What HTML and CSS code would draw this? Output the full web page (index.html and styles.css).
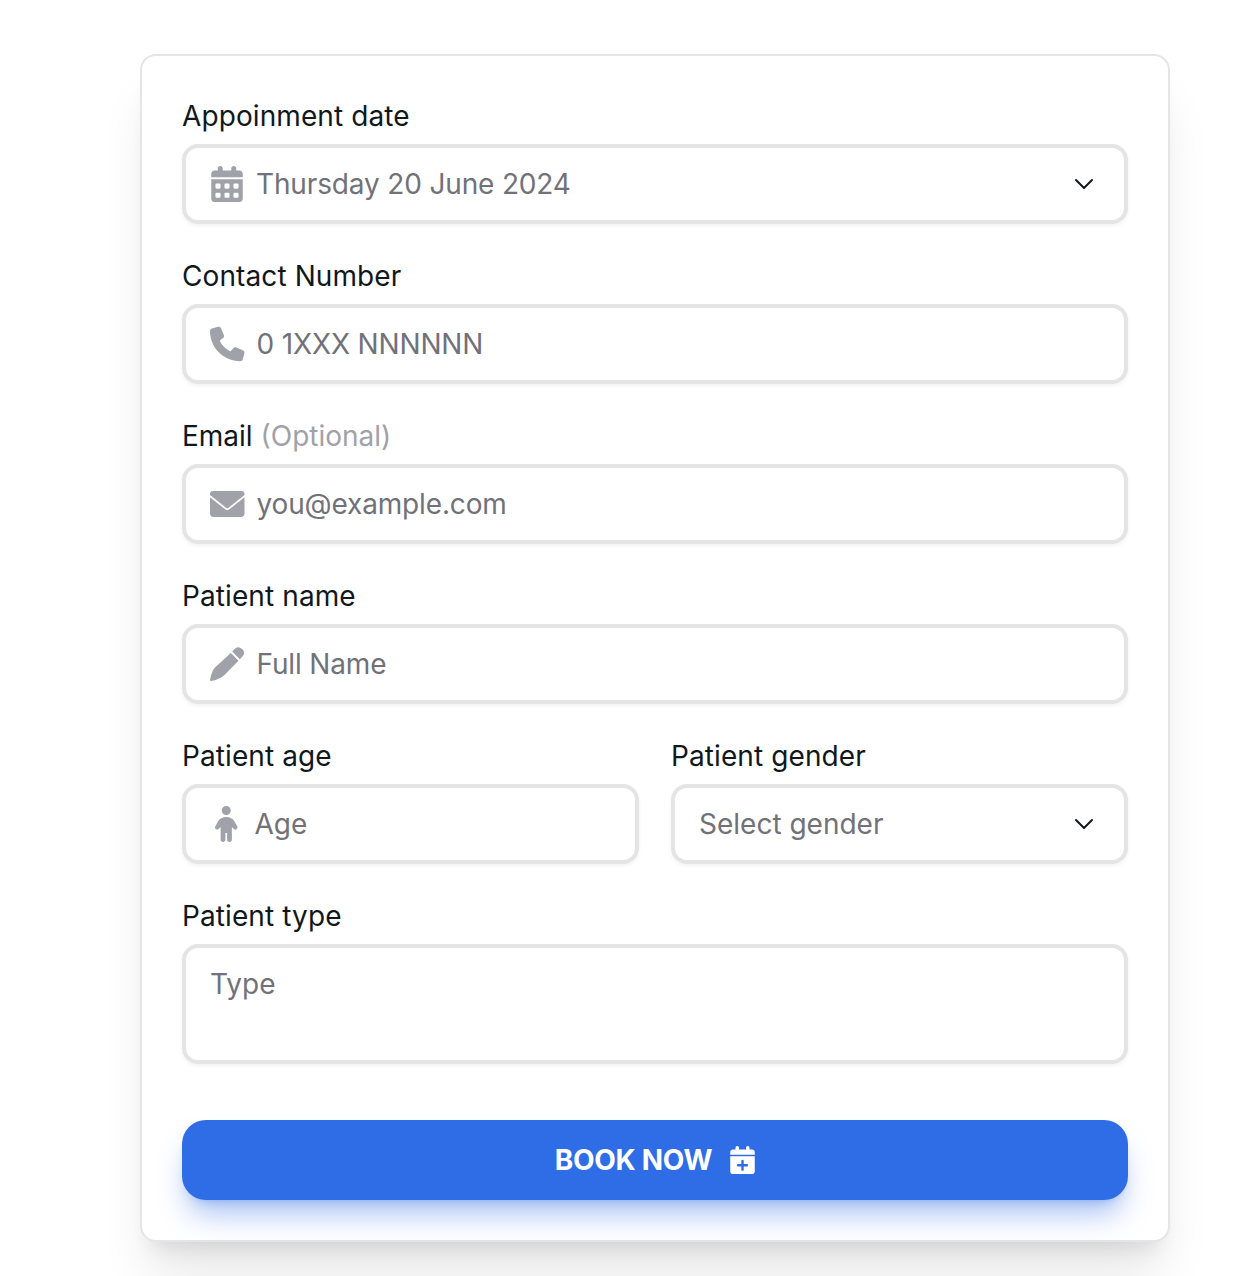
FILE: index.html
```
<!DOCTYPE html>
<html lang="en">
<head>
<meta charset="utf-8">
<title>Book an appointment</title>
<link rel="stylesheet" href="styles.css">
</head>
<body>
<form class="card">
  <div class="field">
    <span class="label">Appoinment date</span>
    <div class="control">
      <svg class="icon calendar" viewBox="0 0 448 512"><path fill-rule="evenodd" d="M128 0c20 0 35 14.300 35 32V64H285V32c0-17.700 15-32 35-32s35 14.300 35 32V64h45c26.500 0 48 21.500 48 48v48H0V112C0 85.500 21.500 64 48 64H93V32c0-17.700 15-32 35-32zM0 188H448V464c0 26.500-21.500 48-48 48H48c-26.500 0-48-21.500-48-48zM76 250a16 16 0 0 0-16 16v40a16 16 0 0 0 16 16h40a16 16 0 0 0 16-16v-40a16 16 0 0 0-16-16zM204 250a16 16 0 0 0-16 16v40a16 16 0 0 0 16 16h40a16 16 0 0 0 16-16v-40a16 16 0 0 0-16-16zM332 250a16 16 0 0 0-16 16v40a16 16 0 0 0 16 16h40a16 16 0 0 0 16-16v-40a16 16 0 0 0-16-16zM76 380a16 16 0 0 0-16 16v40a16 16 0 0 0 16 16h40a16 16 0 0 0 16-16v-40a16 16 0 0 0-16-16zM204 380a16 16 0 0 0-16 16v40a16 16 0 0 0 16 16h40a16 16 0 0 0 16-16v-40a16 16 0 0 0-16-16zM332 380a16 16 0 0 0-16 16v40a16 16 0 0 0 16 16h40a16 16 0 0 0 16-16v-40a16 16 0 0 0-16-16z"/></svg>
      <span class="value tight">Thursday 20 June 2024</span>
      <svg class="chevron" viewBox="0 0 24 24"><path d="m6 9 6 6 6-6"/></svg>
    </div>
  </div>
  <div class="field">
    <span class="label">Contact Number</span>
    <div class="control">
      <svg class="icon" viewBox="0 0 512 512"><path d="M164.900 24.600c-7.700-18.600-28-28.500-47.400-23.200l-88 24C12.100 30.200 0 46 0 64C0 311.400 200.600 512 448 512c18 0 33.800-12.100 38.600-29.500l24-88c5.300-19.400-4.600-39.700-23.200-47.400l-96-40c-16.300-6.800-35.200-2.100-46.300 11.600L304.700 368C234.300 334.700 177.300 277.700 144 207.300L193.300 167c13.700-11.200 18.400-30 11.600-46.300l-40-96z"/></svg>
      <span class="value tight">0 1XXX NNNNNN</span>
    </div>
  </div>
  <div class="field">
    <span class="label email">Email <span class="optional">(Optional)</span></span>
    <div class="control">
      <svg class="icon" viewBox="0 0 34.500 34.500"><path d="M3 4.200h28.500q3 0 3 3v1L18.500 20.900q-1.250 1-2.500 0L0 8.200v-1q0-3 3-3zM0 10.500l15.100 12.100q2.150 1.600 4.300 0L34.500 10.500v16q0 3.700-3.700 3.700H3.700Q0 30.200 0 26.500z"/></svg>
      <span class="value tight">you@example.com</span>
    </div>
  </div>
  <div class="field">
    <span class="label">Patient name</span>
    <div class="control">
      <svg class="icon" viewBox="0 0 34.500 34.500"><path d="M20.800 6.200l7.700 7.700-14.300 14.600q-1.400 1.400-3.200 2.200-4.600 2.600-9.600 3.600-1.600.2-1.300-1.400.8-5 2.800-9.200.9-1.900 2.400-3.300zM22.200 4.800l3-3q3.400-3 6.800.4l.4.400q3.400 3.400.3 6.800l-2.900 3z"/></svg>
      <span class="value tight">Full Name</span>
    </div>
  </div>
  <div class="row">
    <div class="field">
      <span class="label">Patient age</span>
      <div class="control">
        <svg class="icon child" viewBox="0 0 320 512"><path d="M96 64a64 64 0 1 1 128 0A64 64 0 1 1 96 64zm52 320v96c0 17.700-14.300 32-34 32s-34-14.300-34-32V298L59.100 321c-9.400 15-29.200 19.400-44.100 10S-4.500 301.900 4.900 287l34.900-63.300C66 180 110 158 160 158s94 22 120.200 65.600L315.100 287c9.400 15 4.900 34.700-10 44.100s-34.700 4.900-44.100-10L240 298V480c0 17.700-14.300 32-34 32s-34-14.300-34-32V384z"/></svg>
        <span class="value">Age</span>
      </div>
    </div>
    <div class="field">
      <span class="label">Patient gender</span>
      <div class="control">
        <span class="value">Select gender</span>
        <svg class="chevron" viewBox="0 0 24 24"><path d="m6 9 6 6 6-6"/></svg>
      </div>
    </div>
  </div>
  <div class="field">
    <span class="label">Patient type</span>
    <div class="control area"><span class="value">Type</span></div>
  </div>
  <button class="submit" type="button">BOOK NOW
    <svg class="plus" viewBox="0 0 448 512"><path fill-rule="evenodd" d="M96 32a32 32 0 0 1 64 0v32h128V32a32 32 0 0 1 64 0v32h48c26.500 0 48 21.500 48 48v48H0v-48c0-26.500 21.500-48 48-48h48zM0 188h448v276c0 26.500-21.500 48-48 48H48c-26.500 0-48-21.500-48-48zM246 272a22 22 0 0 0-44 0v58h-58a22 22 0 0 0 0 44h58v58a22 22 0 0 0 44 0v-58h58a22 22 0 0 0 0-44h-58z"/></svg>
  </button>
</form>
</body>
</html>
```
FILE: styles.css
```
* { box-sizing: border-box; }
body {
  margin: 0;
  height: 1276px;
  overflow: hidden;
  padding: 54px 76px 0 140px;
  background: #fff;
  color: #11181c;
  font: 400 28px/40px Inter, "Liberation Sans", sans-serif;
}
.card {
  display: flex;
  flex-direction: column;
  gap: 32px;
  padding: 40px;
  border: 2px solid #e4e4e9;
  border-radius: 16px;
  background: #fff;
  box-shadow: 0 40px 50px -10px rgb(0 0 0 / .1), 0 16px 20px -12px rgb(0 0 0 / .1);
}
.field { display: flex; flex-direction: column; gap: 8px; min-width: 0; }
.row { display: grid; grid-template-columns: 1fr 1fr; gap: 32px; }
.label { letter-spacing: .1px; }
.email { letter-spacing: 0; }
.optional { color: #a1a1aa; }
.control {
  display: flex;
  align-items: center;
  height: 80px;
  padding: 0 24px;
  border: 4px solid #e4e4e5;
  border-radius: 16px;
  box-shadow: 0 2px 4px rgb(0 0 0 / .05);
}
.area { height: 120px; align-items: flex-start; padding-top: 16px; }
.value { flex: 1; color: #71717a; white-space: nowrap; }
.tight { letter-spacing: -.15px; }
.icon { width: 34.500px; height: 36px; margin-right: 12px; fill: #a1a1aa; }
.calendar { width: 32px; margin: 0 13px 0 1px; }
.child { width: 22.500px; margin: 0 17px 0 5px; }
.chevron {
  width: 32px;
  height: 32px;
  fill: none;
  stroke: #11181c;
  stroke-width: 1.500;
  stroke-linecap: round;
  stroke-linejoin: round;
}
.submit {
  display: flex;
  align-items: center;
  justify-content: center;
  gap: 18px;
  height: 80px;
  margin-top: 24px;
  border: 0;
  border-radius: 24px;
  background: #2f6de6;
  color: #fff;
  font: 700 28px/40px Inter, "Liberation Sans", sans-serif;
  letter-spacing: -.3px;
  box-shadow: 0 20px 30px -6px rgb(47 109 230 / .4), 0 8px 12px -8px rgb(47 109 230 / .4);
}
.plus { width: 25px; height: 28px; fill: #fff; }
```
